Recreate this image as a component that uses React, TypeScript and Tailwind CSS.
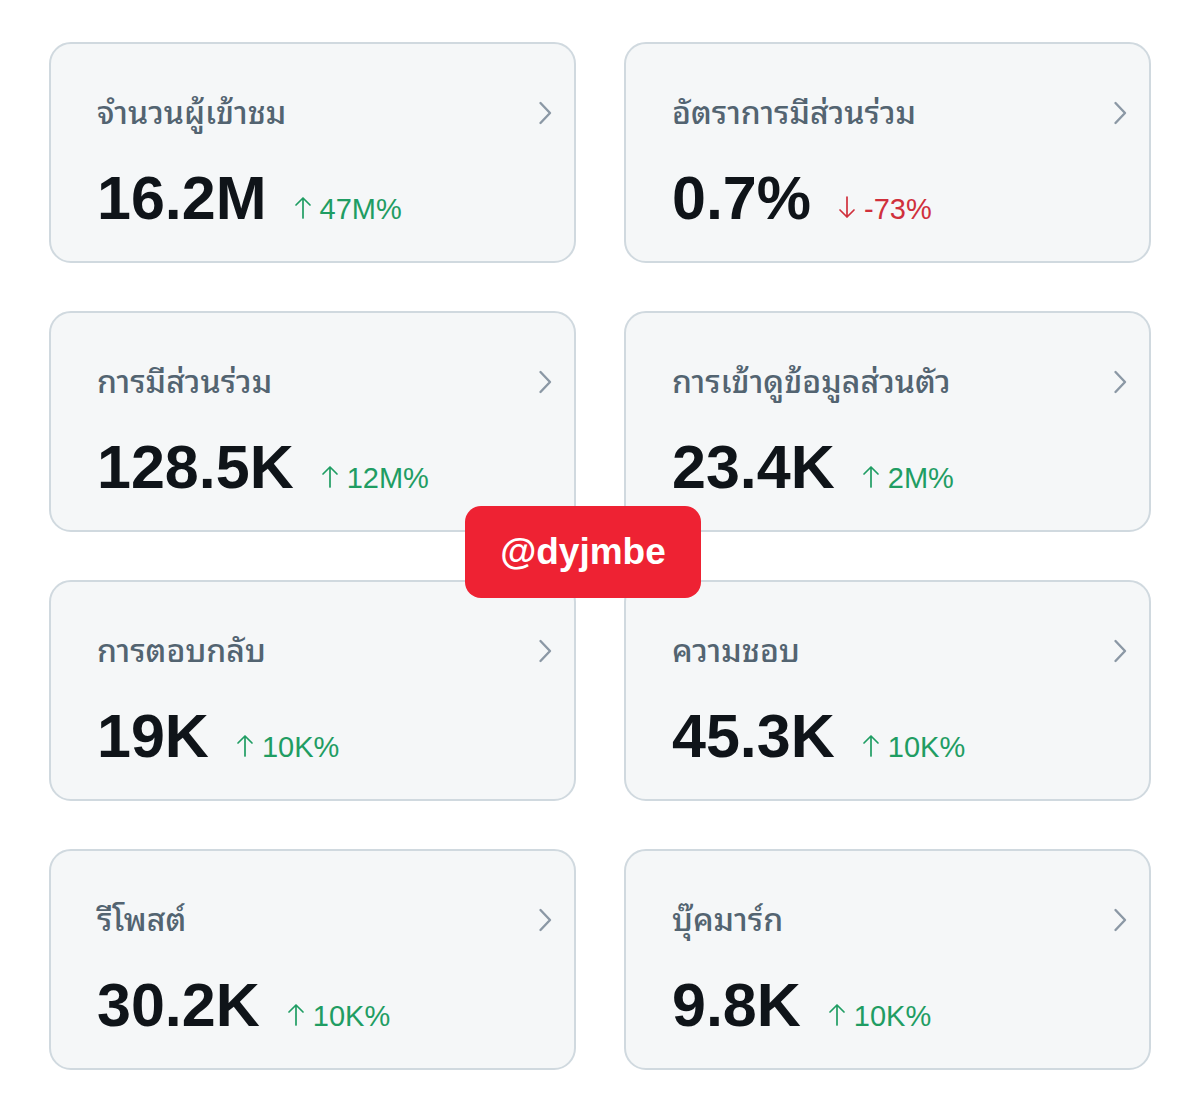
type Stat = {
  label: string
  value: string
  change: string
  up: boolean
}

const stats: Stat[] = [
  { label: 'จำนวนผู้เข้าชม', value: '16.2M', change: '47M%', up: true },
  { label: 'อัตราการมีส่วนร่วม', value: '0.7%', change: '-73%', up: false },
  { label: 'การมีส่วนร่วม', value: '128.5K', change: '12M%', up: true },
  { label: 'การเข้าดูข้อมูลส่วนตัว', value: '23.4K', change: '2M%', up: true },
  { label: 'การตอบกลับ', value: '19K', change: '10K%', up: true },
  { label: 'ความชอบ', value: '45.3K', change: '10K%', up: true },
  { label: 'รีโพสต์', value: '30.2K', change: '10K%', up: true },
  { label: 'บุ๊คมาร์ก', value: '9.8K', change: '10K%', up: true },
]

function Chevron() {
  return (
    <svg width="14" height="24" viewBox="0 0 14 24" fill="none" className="text-[#8b98a5] translate-y-[3px]">
      <path d="M2.5 2 L12 12 L2.5 22" stroke="currentColor" strokeWidth="2.4" strokeLinecap="round" strokeLinejoin="round" />
    </svg>
  )
}

function Arrow({ up }: { up: boolean }) {
  return (
    <svg width="18" height="23" viewBox="0 0 18 23" fill="none" className="mr-[8px]">
      {up ? (
        <path d="M9 22 V2 M2 9 L9 2 L16 9" stroke="currentColor" strokeWidth="1.7" strokeLinecap="round" strokeLinejoin="round" />
      ) : (
        <path d="M9 1 V21 M2 14 L9 21 L16 14" stroke="currentColor" strokeWidth="1.7" strokeLinecap="round" strokeLinejoin="round" />
      )}
    </svg>
  )
}

function StatCard({ stat }: { stat: Stat }) {
  return (
    <div className="h-[221px] rounded-[22px] border-2 border-[#d0d9df] bg-[#f5f7f8] pl-[46px] pr-[22px] pt-[46px]">
      <div className="flex items-center justify-between">
        <span className="text-[32px] leading-[40px] font-medium text-[#536471]">{stat.label}</span>
        <Chevron />
      </div>
      <div className="mt-[38px] flex items-baseline">
        <span className="text-[61px] leading-[60px] font-bold text-[#0f1419] [font-family:'Liberation_Sans',Arial,sans-serif]">
          {stat.value}
        </span>
        <span
          className={`ml-[27px] flex items-baseline text-[29px] leading-[30px] [font-family:'Liberation_Sans',Arial,sans-serif] ${stat.up ? 'text-[#1f9d63]' : 'text-[#d0303c]'}`}
        >
          <Arrow up={stat.up} />
          {stat.change}
        </span>
      </div>
    </div>
  )
}

export default function App() {
  return (
    <div className="relative min-h-[1112px] w-[1200px] bg-white [font-family:'Noto_Sans_Thai_Looped','Noto_Sans_Thai','Noto_Sans','Liberation_Sans',sans-serif]">
      <div className="grid grid-cols-2 gap-x-12 gap-y-12 px-[49px] pt-[42px]">
        {stats.map((s) => (
          <StatCard key={s.label} stat={s} />
        ))}
      </div>

      {/* handle tag over the grid */}
      <div className="absolute left-[465px] top-[506px] flex h-[92px] w-[236px] items-center justify-center rounded-[16px] bg-[#ee2233]">
        <span className="text-[37px] font-bold text-white [font-family:'Liberation_Sans',Arial,sans-serif]">@dyjmbe</span>
      </div>
    </div>
  )
}
